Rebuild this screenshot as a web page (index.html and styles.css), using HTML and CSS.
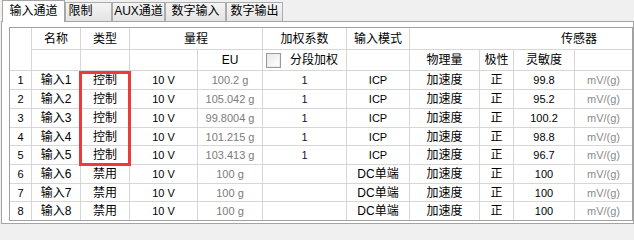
FILE: index.html
```html
<!DOCTYPE html>
<html lang="zh-CN">
<head>
<meta charset="utf-8">
<title>输入通道</title>
<link rel="stylesheet" href="styles.css">
</head>
<body>
<div class="tabs">
  <div class="tab active">输入通道</div>
  <div class="tab t-limit">限制</div>
  <div class="tab t-aux">AUX通道</div>
  <div class="tab t-din">数字输入</div>
  <div class="tab t-dout">数字输出</div>
</div>
<div class="page">
  <table class="grid">
    <colgroup>
      <col class="c0"><col class="c1"><col class="c2"><col class="c3"><col class="c4"><col class="c5"><col class="c6"><col class="c7"><col class="c8"><col class="c9"><col class="c10">
    </colgroup>
    <thead>
      <tr class="h1">
        <th rowspan="2" class="corner"></th>
        <th>名称</th>
        <th>类型</th>
        <th colspan="2">量程</th>
        <th>加权系数</th>
        <th>输入模式</th>
        <th colspan="4" class="sensor">传感器</th>
      </tr>
      <tr class="h2">
        <th></th>
        <th></th>
        <th></th>
        <th>EU</th>
        <th class="chk"><span class="chk-wrap"><span class="box"></span><span>分段加权</span></span></th>
        <th></th>
        <th>物理量</th>
        <th>极性</th>
        <th>灵敏度</th>
        <th></th>
      </tr>
    </thead>
    <tbody>
      <tr><td class="n">1</td><td>输入1</td><td>控制</td><td class="n">10 V</td><td class="n eu">100.2 g</td><td class="n w">1</td><td class="n">ICP</td><td>加速度</td><td>正</td><td class="n">99.8</td><td class="n unit">mV/(g)</td></tr>
      <tr><td class="n">2</td><td>输入2</td><td>控制</td><td class="n">10 V</td><td class="n eu">105.042 g</td><td class="n w">1</td><td class="n">ICP</td><td>加速度</td><td>正</td><td class="n">95.2</td><td class="n unit">mV/(g)</td></tr>
      <tr><td class="n">3</td><td>输入3</td><td>控制</td><td class="n">10 V</td><td class="n eu">99.8004 g</td><td class="n w">1</td><td class="n">ICP</td><td>加速度</td><td>正</td><td class="n">100.2</td><td class="n unit">mV/(g)</td></tr>
      <tr><td class="n">4</td><td>输入4</td><td>控制</td><td class="n">10 V</td><td class="n eu">101.215 g</td><td class="n w">1</td><td class="n">ICP</td><td>加速度</td><td>正</td><td class="n">98.8</td><td class="n unit">mV/(g)</td></tr>
      <tr><td class="n">5</td><td>输入5</td><td>控制</td><td class="n">10 V</td><td class="n eu">103.413 g</td><td class="n w">1</td><td class="n">ICP</td><td>加速度</td><td>正</td><td class="n">96.7</td><td class="n unit">mV/(g)</td></tr>
      <tr><td class="n">6</td><td>输入6</td><td>禁用</td><td class="n">10 V</td><td class="n eu">100 g</td><td class="n w"></td><td>DC单端</td><td>加速度</td><td>正</td><td class="n">100</td><td class="n unit">mV/(g)</td></tr>
      <tr><td class="n">7</td><td>输入7</td><td>禁用</td><td class="n">10 V</td><td class="n eu">100 g</td><td class="n w"></td><td>DC单端</td><td>加速度</td><td>正</td><td class="n">100</td><td class="n unit">mV/(g)</td></tr>
      <tr><td class="n">8</td><td>输入8</td><td>禁用</td><td class="n">10 V</td><td class="n eu">100 g</td><td class="n w"></td><td>DC单端</td><td>加速度</td><td>正</td><td class="n">100</td><td class="n unit">mV/(g)</td></tr>
    </tbody>
  </table>
</div>
<div class="mark"></div>
</body>
</html>
```

FILE: styles.css
```css
* { box-sizing: border-box; }

html, body {
  margin: 0;
  padding: 0;
}

body {
  width: 634px;
  height: 225px;
  overflow: hidden;
  background: #f0f0f0;
  font-family: "Liberation Sans", "Noto Sans CJK SC", sans-serif;
  font-size: 12px;
  color: #000;
  position: relative;
}

/* ---------- tabs ---------- */
.tabs {
  display: flex;
  align-items: flex-end;
  height: 21px;
  padding-left: 2px;
  position: relative;
  z-index: 1;
}

.tab {
  height: 19px;
  line-height: 17px;
  text-align: center;
  white-space: nowrap;
  border: 1px solid #acacac;
  border-bottom: none;
  background: linear-gradient(#f4f4f4, #e4e4e4);
  color: #000;
}

.tab.active {
  width: 63px;
  height: 22px;
  line-height: 20px;
  margin-bottom: -1px;
  background: #ffffff;
  border-color: #a4a4a4;
}

.t-limit { width: 47px; padding-right: 16px; }
.t-aux   { width: 53px; }
.t-din   { width: 61px; }
.t-dout  { width: 57px; }

/* ---------- tab page ---------- */
.page {
  margin-left: 1px;
  width: 633px;
  height: 203px;
  background: #ffffff;
  border: 1px solid #a4a4a4;
  padding: 5px 0 0 7px;
  overflow: hidden;
}

/* ---------- grid ---------- */
.grid {
  table-layout: fixed;
  width: 624px;
  border-collapse: separate;
  border-spacing: 0;
  border: 1px solid #a0a0a0;
  background: #ffffff;
}

.c0  { width: 22px; }
.c1  { width: 49px; }
.c2  { width: 49px; }
.c3  { width: 68px; }
.c4  { width: 65px; }
.c5  { width: 84px; }
.c6  { width: 63px; }
.c7  { width: 70px; }
.c8  { width: 34px; }
.c9  { width: 61px; }
.c10 { width: 57px; }

.grid th,
.grid td {
  padding: 0;
  border-right: 1px solid #d6d6d6;
  border-bottom: 1px solid #d6d6d6;
  text-align: center;
  vertical-align: middle;
  white-space: nowrap;
  overflow: hidden;
  line-height: 14px;
  font-weight: normal;
}

.grid tr > :last-child { border-right: none; }
.grid tbody tr:last-child td { border-bottom: none; }

.h1 { height: 22px; }
.h2 { height: 21px; }

.grid tbody tr { height: 19px; }
.grid tbody tr:nth-child(4),
.grid tbody tr:nth-child(7),
.grid tbody tr:last-child { height: 18px; }

.sensor {
  padding-left: 116px !important;
}

.chk {
  text-align: left !important;
  padding-left: 3px !important;
}

.chk-wrap {
  display: flex;
  align-items: center;
  gap: 9px;
}

.box {
  width: 15px;
  height: 15px;
  border: 1px solid #9a9a9a;
  background: linear-gradient(135deg, #e8e8e8, #ffffff);
  box-shadow: inset 0 0 0 1px #ececec;
  flex: none;
}

.n { font-size: 11px; }
.eu { color: #7c7c7c; }
.unit { color: #8a8a8a; }
.w { color: #1e0c30; }

/* ---------- annotation ---------- */
.mark {
  position: absolute;
  left: 79px;
  top: 71px;
  width: 52px;
  height: 95px;
  border: 3px solid #ec3b3b;
  pointer-events: none;
}
```
